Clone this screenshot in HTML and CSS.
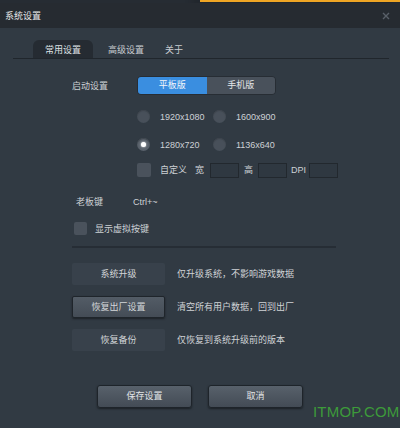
FILE: index.html
```html
<!DOCTYPE html>
<html>
<head>
  <meta charset="UTF-8">
  <title>系统设置</title>
  <link rel="stylesheet" href="styles.css">
</head>
<body>
  <div class="window">
    <div class="top-strip"><div class="strip-accent"></div></div>
    <div class="titlebar">
      <div class="title">系统设置</div>
      <svg class="close" width="8" height="8" viewBox="0 0 8 8">
        <path d="M1 1 L7 7 M7 1 L1 7" stroke="#596069" stroke-width="1.4"/>
      </svg>
    </div>

    <div class="content">
      <div class="tabs">
        <div class="tab active">常用设置</div>
        <div class="tab">高级设置</div>
        <div class="tab">关于</div>
      </div>

      <div class="settings">
        <div class="row launch-row">
          <div class="label">启动设置</div>
          <div class="segmented">
            <div class="seg active">平板版</div>
            <div class="seg">手机版</div>
          </div>
        </div>

        <div class="indent radio-row first">
          <div class="radio-item"><span class="radio"></span><span>1920x1080</span></div>
          <div class="radio-item"><span class="radio"></span><span>1600x900</span></div>
        </div>
        <div class="indent radio-row">
          <div class="radio-item"><span class="radio checked"></span><span>1280x720</span></div>
          <div class="radio-item"><span class="radio"></span><span>1136x640</span></div>
        </div>

        <div class="indent custom-row">
          <span class="checkbox"></span>
          <span class="custom-label">自定义</span>
          <span class="dim-label dim-w">宽</span>
          <span class="field"></span>
          <span class="dim-label dim-h">高</span>
          <span class="field"></span>
          <span class="dim-label dim-dpi">DPI</span>
          <span class="field"></span>
        </div>

        <div class="row boss-row">
          <div class="label boss-label">老板键</div>
          <div class="hotkey">Ctrl+~</div>
        </div>

        <div class="row virtual-row">
          <span class="checkbox"></span>
          <span>显示虚拟按键</span>
        </div>

        <div class="divider"></div>

        <div class="action-row first-action">
          <div class="action-btn">系统升级</div>
          <div class="action-desc">仅升级系统，不影响游戏数据</div>
        </div>
        <div class="action-row">
          <div class="action-btn raised">恢复出厂设置</div>
          <div class="action-desc">清空所有用户数据，回到出厂</div>
        </div>
        <div class="action-row">
          <div class="action-btn">恢复备份</div>
          <div class="action-desc">仅恢复到系统升级前的版本</div>
        </div>
      </div>

      <div class="footer">
        <div class="footer-btn">保存设置</div>
        <div class="footer-btn">取消</div>
      </div>
    </div>

    <div class="watermark">ITMOP.COM</div>
  </div>
</body>
</html>
```

FILE: styles.css
```css
body {
  margin: 0;
  padding: 0;
  width: 400px;
  height: 428px;
  overflow: hidden;
  background: #313a43;
  font-family: 'Liberation Sans', 'Noto Sans CJK SC', sans-serif;
  font-size: 9px;
  color: #cdd1d5;
}

.window {
  position: relative;
  width: 400px;
  height: 428px;
  display: flex;
  flex-direction: column;
  background: #313a43;
}

/* Title bar */
.top-strip {
  height: 3px;
  background: #262c33;
  display: flex;
  justify-content: flex-end;
}

.strip-accent {
  width: 200px;
  height: 2px;
  background: #eea524;
  box-shadow: -8px 0 6px #14171b;
}

.titlebar {
  height: 25px;
  background: #262b31;
  display: flex;
  align-items: center;
  justify-content: space-between;
  padding: 0 10px 0 5px;
}

.title {
  color: #e6e8ea;
  font-size: 9px;
  line-height: 12px;
}

/* Tabs */
.content {
  flex: 1;
  display: flex;
  flex-direction: column;
}

.tabs {
  display: flex;
  margin: 12px 11px 0 13px;
  padding-left: 20px;
  border-bottom: 1px solid #20262c;
  height: 18px;
}

.tab {
  width: 60px;
  text-align: center;
  line-height: 20px;
  color: #c9cdd1;
}

.tab:nth-child(2) {
  width: 66px;
}

.tab:nth-child(3) {
  width: 30px;
}

.tab.active {
  background: #252b32;
  border-radius: 6px 6px 0 0;
  color: #dfe2e5;
}

/* Settings form */
.settings {
  padding-left: 72px;
  display: flex;
  flex-direction: column;
}

.row {
  display: flex;
  align-items: center;
}

.launch-row {
  margin-top: 17px;
  height: 19px;
}

.label {
  width: 65px;
  line-height: 12px;
}

.segmented {
  display: flex;
  width: 139px;
  height: 19px;
  border-radius: 4px;
  overflow: hidden;
  border: 1px solid #272d34;
  box-sizing: border-box;
}

.seg {
  flex: 1;
  text-align: center;
  line-height: 17px;
  background: #49515b;
  color: #e4e6e8;
}

.seg.active {
  background: #3a8ee0;
  color: #f2f6fa;
}

.indent {
  margin-left: 65px;
}

.radio-row {
  display: flex;
  height: 13px;
  margin-top: 15px;
}

.radio-item {
  width: 76px;
  display: flex;
  align-items: center;
  gap: 10px;
  line-height: 12px;
}

.radio {
  width: 13px;
  height: 13px;
  border-radius: 50%;
  background: #48505a;
  box-shadow: inset 0 1px 1px #3c434b;
  display: flex;
  align-items: center;
  justify-content: center;
}

.radio.checked {
  background: #5a626c;
}

.radio.checked::after {
  content: "";
  width: 5px;
  height: 5px;
  border-radius: 50%;
  background: #ffffff;
  box-shadow: 0 0 2px #ffffff;
}

.custom-row {
  display: flex;
  align-items: center;
  height: 14px;
  margin-top: 12px;
}

.checkbox {
  width: 14px;
  height: 14px;
  border-radius: 2px;
  background: #4a525c;
  display: inline-block;
}

.custom-label {
  margin-left: 9px;
  width: 35px;
  line-height: 12px;
}

.dim-label {
  line-height: 12px;
}

.dim-w {
  margin-right: 6px;
}

.dim-h {
  margin-left: 5px;
  margin-right: 5px;
}

.dim-dpi {
  margin-left: 4px;
  margin-right: 3px;
}

.field {
  width: 29px;
  height: 15px;
  box-sizing: border-box;
  border: 1px solid #22282e;
  background: #2f3841;
}

.boss-row {
  margin-top: 19px;
  height: 12px;
}

.boss-label {
  margin-left: 4px;
  width: 57px;
}

.hotkey {
  line-height: 12px;
}

.virtual-row {
  margin-top: 14px;
  margin-left: 2px;
  gap: 8px;
  line-height: 12px;
}

.virtual-row .checkbox {
  width: 13px;
  height: 13px;
}

.divider {
  margin-top: 11px;
  width: 264px;
  height: 2px;
  background: #262d35;
}

.action-row {
  display: flex;
  align-items: center;
  gap: 12px;
  margin-top: 11px;
}

.action-row.first-action {
  margin-top: 15px;
}

.action-btn {
  width: 93px;
  height: 22px;
  line-height: 22px;
  text-align: center;
  background: #38414b;
  border-radius: 2px;
  color: #d3d6d9;
}

.action-btn.raised {
  background: linear-gradient(#535c66, #444c56);
  border: 1px solid #1f252b;
  box-sizing: border-box;
  line-height: 20px;
  box-shadow: 0 1px 2px #1c2126;
}

.action-desc {
  line-height: 12px;
  color: #d0d3d6;
}

/* Footer buttons */
.footer {
  display: flex;
  justify-content: center;
  gap: 16px;
  margin-top: 34px;
}

.footer-btn {
  width: 95px;
  height: 23px;
  box-sizing: border-box;
  line-height: 21px;
  text-align: center;
  background: linear-gradient(#58616b, #434b55);
  border: 1px solid #1e242a;
  border-radius: 3px;
  box-shadow: 0 1px 2px #1b2025;
  color: #e1e4e6;
}

.watermark {
  position: absolute;
  left: 313px;
  top: 403px;
  font-family: 'Liberation Sans', sans-serif;
  font-size: 15px;
  line-height: 17px;
  color: #3d9b3a;
  letter-spacing: 0.2px;
}
```
